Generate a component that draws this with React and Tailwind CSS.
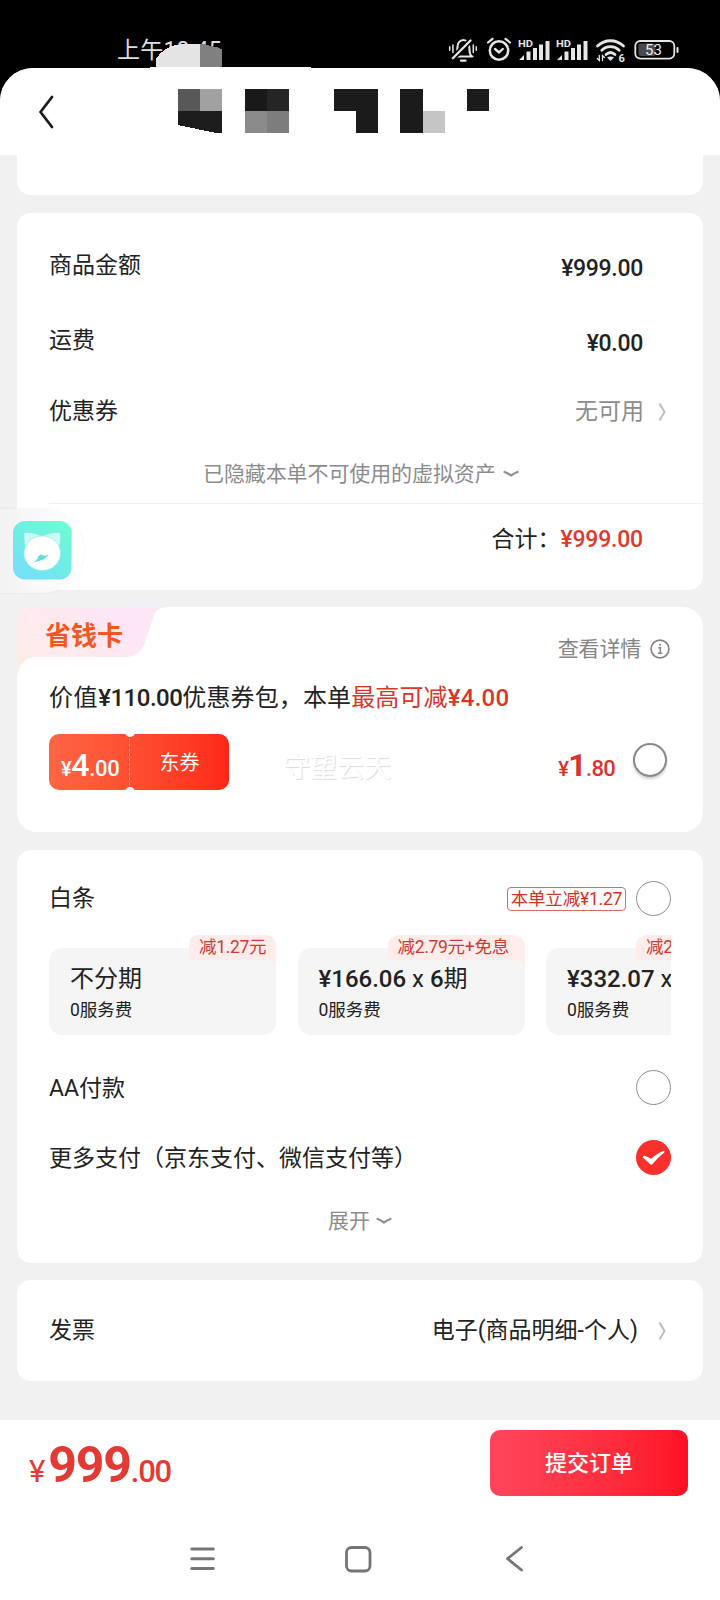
import React from 'react'

const plans = [
    { id: 1, title: '不分期', fee: '0服务费', badge: '减1.27元', badgeWidth: 'w-[87px]' },
    { id: 2, amount: '¥166.06', times: '6', unit: '期', fee: '0服务费', badge: '减2.79元+免息', badgeWidth: 'w-[137px]' },
    { id: 3, amount: '¥332.07', fee: '0服务费', badge: '减2', badgeWidth: 'w-[137px]' },
]

const StatusIcons = () => (
    <svg className="absolute left-[440px] top-[32px]" width="250" height="36" viewBox="440 32 250 36" fill="none" stroke="#e6e6e6" strokeLinecap="round">
        {/* muted bell */}
        <g strokeWidth="2.1">
            <path d="M454 56.500h18.500M455.500 56c1.800-2 1.900-4 1.900-8 0-4.800 2.500-8 6-8s6 3.200 6 8c0 4 .2 6 1.900 8" />
            <path d="M452.500 58.500L471 40" stroke="#000" strokeWidth="5.500" />
            <path d="M452.800 58.200L470.500 40.500" strokeWidth="2.300" />
            <path d="M461 60.700h4.500" strokeWidth="2.300" />
            <path d="M449.700 46.800v3.500M452.900 45v7.500M473.300 45v7.500M476.300 46.800v3.500" strokeWidth="1.500" />
        </g>
        {/* alarm */}
        <circle cx="499" cy="50.500" r="9.200" strokeWidth="2.500" />
        <path d="M495 49l4 3.400 3.800-3.400" strokeWidth="2.300" />
        <path d="M488 42.500l4.500-3.700M510 42.500l-4.500-3.700" strokeWidth="2.200" />
        {/* signals */}
        <g fill="#e6e6e6" stroke="none">
            <text x="518" y="46.800" fontSize="9.500" fontWeight="700" fontFamily="Roboto, sans-serif" textLength="15" lengthAdjust="spacingAndGlyphs">HD</text>
            <text x="556" y="46.800" fontSize="9.500" fontWeight="700" fontFamily="Roboto, sans-serif" textLength="15" lengthAdjust="spacingAndGlyphs">HD</text>
            <path d="M519 60l5-5v5zM526.500 51.500h4v8.500h-4zM533 48h4v12h-4zM539 44.500h4v15.500h-4zM545.500 41h4v19h-4z" />
            <path d="M557 60l5-5v5zM564.500 51.500h4v8.500h-4zM571 48h4v12h-4zM577 44.500h4v15.500h-4zM583.500 41h4v19h-4z" />
        </g>
        {/* wifi */}
        <path d="M597.500 46c7.500-7 18.500-7 26 0M601.800 50.300c5-4.800 12.400-4.800 17.400 0M606 54.500c2.800-2.600 6.200-2.600 9 0" strokeWidth="2.800" />
        <path d="M607 57.500l3.500 3.500 3.500-3.500c-2-1.500-5-1.500-7 0z" fill="#e6e6e6" stroke="none" />
        <path d="M599.300 55.500v5l-2-2M602.500 60.500v-5l2 2" strokeWidth="1.300" />
        <text x="618.500" y="61.500" fontSize="11" fontWeight="700" fill="#e6e6e6" stroke="none" fontFamily="Roboto, sans-serif">6</text>
        {/* battery */}
        <rect x="635.300" y="41" width="39" height="17.600" rx="5" strokeWidth="1.800" />
        <rect x="638.500" y="43.500" width="17" height="12.600" rx="2" fill="#4a4a4a" stroke="none" />
        <path d="M677.500 48v4" strokeWidth="2" />
        <text x="645" y="55.200" fontSize="15" fill="#eee" stroke="none" fontFamily="Roboto, sans-serif">53</text>
    </svg>
)

const Mosaic = () => (
    <svg className="absolute left-0 top-0" width="720" height="154" viewBox="0 0 720 154" shapeRendering="crispEdges">
        <path d="M150 68v-1.500h155l9 1.500z" fill="#fff" />
        <path d="M156 67V59Q164 46 182 44H200V67z" fill="#e4e4e4" />
        <path d="M200 44H204L222 49V67H200z" fill="#808080" />
        <path d="M178 89h22v22h-22z" fill="#585858" />
        <path d="M200 89h22v22h-22z" fill="#a1a1a1" />
        <path d="M178 111h44v22h-6l-38-8z" fill="#1d1d1d" />
        <path d="M245 89h22v22h-22z" fill="#191919" />
        <path d="M267 89h22v22h-22z" fill="#252525" />
        <path d="M245 111h22v22h-22z" fill="#8b8b8b" />
        <path d="M267 111h22v22h-22z" fill="#7d7d7d" />
        <path d="M334 89h44v44h-22v-22h-22z" fill="#1b1b1b" />
        <path d="M400 89h22.500v44h-22.500z" fill="#1b1b1b" />
        <path d="M422.500 111h22v22h-22z" fill="#c5c5c5" />
        <path d="M467 89h22v22h-22z" fill="#1b1b1b" />
    </svg>
)

const Chevron = () => (
    <svg width="9" height="20" viewBox="0 0 9 20" fill="none" stroke="#bdbdbd" strokeWidth="2">
        <path d="M1.500 1.500L6.500 10l-5 8.500" />
    </svg>
)

const Caret = () => (
    <svg width="16" height="8" viewBox="0 0 16 8" fill="none" stroke="#8f8f8f" strokeWidth="2.2" strokeLinecap="round" strokeLinejoin="round">
        <path d="M1.500 2q3 1 6.500 3.500q3.500-2.500 6.500-3.500" />
    </svg>
)

const Radio = () => <span className="h-[35px] w-[35px] shrink-0 rounded-full border border-[#8c8c8c]" />

const Plan = ({ plan }) => (
    <div className="relative h-[87px] w-[227px] shrink-0 rounded-[13px] bg-[#f5f5f5] pl-[22px] pt-[14px]">
        <div className={`absolute right-0 -top-[13px] h-[33px] ${plan.badgeWidth}`}>
            <svg className="absolute inset-0 h-full w-full" viewBox="0 0 100 33" preserveAspectRatio="none">
                <path d="M0 25V12Q0 0 10 0H88Q100 0 100 12V33Q99 25 90 25z" fill="#ffeceb" />
            </svg>
            <span className="absolute left-[10px] top-0 whitespace-nowrap text-[17.500px] leading-[25px] tracking-[-0.3px] text-[#d03a31]">{plan.badge}</span>
        </div>
        <div className="-ml-px whitespace-nowrap text-[24px] leading-[34px]">
            {plan.title}
            {plan.amount && (
                <>
                    <span className="font-medium">{plan.amount}</span> x <span className="font-medium">{plan.times}</span>{plan.unit}
                </>
            )}
        </div>
        <div className="-ml-px text-[17.500px] leading-[28px]">{plan.fee}</div>
    </div>
)

const FloatingApp = () => (
    <div className="absolute left-0 top-[509px] flex h-[84px] w-[84px] items-center rounded-r-full bg-gradient-to-r from-[#f3f3f3]/90 to-white/90 pl-[13px] shadow-[0_0_3px_rgba(0,0,0,0.07)]">
        <svg className="-mt-px" width="58.500" height="58.500" viewBox="0 0 59 59">
            <defs>
                <linearGradient id="app" x1="0.1" y1="1" x2="0.8" y2="0">
                    <stop offset="0" stopColor="#76defd" />
                    <stop offset="0.5" stopColor="#70ece6" />
                    <stop offset="1" stopColor="#6ffbd4" />
                </linearGradient>
            </defs>
            <rect width="59" height="59" rx="12" fill="url(#app)" />
            <path d="M11.500 12q10-.5 18 4l-15 15q-4-8-3-19zM47.500 12q-10-.5-18 4l15 15q4-8 3-19z" fill="#fff" opacity="0.65" />
            <ellipse cx="29.500" cy="32.500" rx="18.500" ry="17.500" fill="#fff" stroke="#8fede4" strokeWidth="0.800" />
            <path d="M21 41.500l5-4.500 10-3-5 4.500-6 2zM24 37l4-3.500 3 1.500 5-.5-4 3z" fill="#5fdde0" />
        </svg>
    </div>
)

const App = () => {
    return (
        <div className="relative flex h-[1600px] w-[720px] flex-col overflow-hidden bg-black font-[Roboto,'Noto_Sans_CJK_SC',sans-serif] text-[23px] leading-[34px] text-[#222]">
            <div className="h-[68px] shrink-0 pl-[117px] pt-[34px] tracking-[0.2px] text-[#dedede]">上午10:45</div>
            <StatusIcons />

            <main className="flex flex-1 flex-col overflow-hidden rounded-t-[33px] bg-[#f1f1f1]">
                <header className="flex h-[87px] shrink-0 items-center bg-white pl-[38px]">
                    <svg width="17" height="36" viewBox="0 0 17 36" fill="none" stroke="#1c1c1c" strokeWidth="2.800" strokeLinecap="round" strokeLinejoin="round">
                        <path d="M14 3L2.500 18L14 33" />
                    </svg>
                </header>

                <div className="flex flex-col gap-[17.500px] px-[17px]">
                    <section className="h-[40px] rounded-b-[14px] bg-white" />

                    {/* amounts */}
                    <section className="h-[377px] rounded-[14px] bg-white pl-8 pt-[15px]">
                        <div className="flex h-[76px] items-center justify-between pr-[60px]">
                            <span>商品金额</span>
                            <span className="pt-[6px] font-medium tracking-[-0.300px]">¥999.00</span>
                        </div>
                        <div className="flex h-[75px] items-center justify-between pr-[60px]">
                            <span>运费</span>
                            <span className="pt-[6px] font-medium tracking-[-0.300px]">¥0.00</span>
                        </div>
                        <div className="flex h-[67px] items-center justify-between pr-[36px]">
                            <span>优惠券</span>
                            <span className="flex items-center gap-[14px] text-[#8c8c8c]">无可用<Chevron /></span>
                        </div>
                        <div className="flex h-[57px] items-center gap-[7px] pl-[154px] text-[21px] tracking-[-0.100px] text-[#8c8c8c]">
                            已隐藏本单不可使用的虚拟资产
                            <Caret />
                        </div>
                        <div className="flex h-[74px] items-center justify-end border-t border-[#f0f0f0] pr-[60px]">
                            合计：<span className="font-medium tracking-[-0.200px] text-[#e0382f]">¥999.00</span>
                        </div>
                    </section>

                    {/* saving card */}
                    <section className="relative h-[225px] rounded-[20px] bg-white pl-8">
                        <svg className="absolute left-0 top-0" width="152" height="74" viewBox="0 0 152 74">
                            <defs>
                                <linearGradient id="tab" x1="0" y1="1" x2="1" y2="0.4">
                                    <stop offset="0" stopColor="#ffece6" />
                                    <stop offset="1" stopColor="#fde6f8" />
                                </linearGradient>
                            </defs>
                            <path d="M0 70V18Q0 0 18 0H150Q140 0 137 8L127 38Q122 50 110 50H20Q3 50 0 70z" fill="url(#tab)" />
                        </svg>
                        <div className="relative flex h-[74px] justify-between pr-[33px]">
                            <span className="-ml-1 pt-[12px] text-[26px] font-bold text-[#f2571d]">省钱卡</span>
                            <span className="flex h-full items-center gap-[9px] pt-[10px] text-[21px] tracking-[-0.2px] text-[#858585]">
                                查看详情
                                <svg width="20" height="20" viewBox="0 0 20 20" fill="none" stroke="#858585" strokeWidth="1.700">
                                    <circle cx="10" cy="10" r="8.900" />
                                    <path d="M8.300 8.800h2V14M8 14.300h4.300M9 5.800h2" strokeWidth="1.500" />
                                </svg>
                            </span>
                        </div>
                        <div className="whitespace-nowrap text-[24px] tracking-[0.120px]">
                            <span className="tracking-[0.600px]">价值</span><span className="font-medium tracking-[-0.500px]">¥110.00</span>优惠券包，本单
                            <span className="text-[#da3529]">最高可减<span className="font-medium tracking-[0.300px]">¥4.00</span></span>
                        </div>
                        <div className="mt-[19px] flex items-center">
                            <div className="relative flex h-[56px] w-[180px] overflow-hidden rounded-[10px] bg-gradient-to-r from-[#ff6543] to-[#ff2618] text-white">
                                <div className="flex w-[81px] items-baseline border-r border-dashed border-white/40 pl-3 pt-[14px] font-medium tracking-[-0.300px]">
                                    <span className="text-[20px]">¥</span>
                                    <span className="text-[32px]">4</span>
                                    <span className="text-[22px]">.00</span>
                                </div>
                                <div className="flex flex-1 items-center justify-center pt-[2px] text-[20px]">东券</div>
                                <span className="absolute -top-[7px] left-[76px] h-[10px] w-[10px] rounded-full bg-white" />
                                <span className="absolute -bottom-[7px] left-[76px] h-[10px] w-[10px] rounded-full bg-white" />
                            </div>
                            <span className="ml-[54px] mt-3 text-[27px] text-white [text-shadow:1px_1px_1px_#dcdcdc]">守望云天</span>
                            <div className="ml-auto flex items-baseline pt-[9px] font-medium tracking-[-0.700px] text-[#d8352a]">
                                <span className="text-[20px]">¥</span>
                                <span className="text-[32px] font-bold">1</span>
                                <span className="text-[22px]">.80</span>
                            </div>
                            <span className="-mt-1 ml-[18px] mr-[36px] h-[34px] w-[34px] rounded-full border-[2.500px] border-[#888] shadow-[0_2px_3px_rgba(0,0,0,0.2)]" />
                        </div>
                    </section>

                    {/* payment */}
                    <section className="h-[413px] rounded-[14px] bg-white px-8 pt-[14px]">
                        <div className="flex h-[70px] items-center">
                            <span className="pt-px">白条</span>
                            <span className="ml-auto mr-[10px] flex h-[24px] w-[119px] items-center justify-center whitespace-nowrap rounded-[4px] border border-[#cf6d62] text-[17.500px] tracking-[-0.2px] text-[#cf3327]">本单立减¥1.27</span>
                            <Radio />
                        </div>
                        <div className="flex gap-[21.500px] overflow-hidden pt-[14px]">
                            {plans.map((plan) => <Plan key={plan.id} plan={plan} />)}
                        </div>
                        <div className="mt-[18px] flex h-[70px] items-center justify-between">
                            <span className="pt-[2px]">AA付款</span>
                            <Radio />
                        </div>
                        <div className="flex h-[70px] items-center justify-between">
                            <span className="pt-[2px]">更多支付（京东支付、微信支付等）</span>
                            <svg width="35" height="35" viewBox="0 0 35 35">
                                <circle cx="17.500" cy="17.500" r="17.500" fill="#fa302c" />
                                <path d="M6.500 17.200q1.500-2 3.500-1l5 2.500q6-5.500 12.500-8q2 .6 0 2.500Q21 18 16.500 24q-1 1.500-2.500 0z" fill="#fff" />
                            </svg>
                        </div>
                        <div className="flex h-[56px] items-center justify-center gap-[6px] text-[21px] text-[#8c8c8c]">
                            展开
                            <Caret />
                        </div>
                    </section>

                    {/* invoice */}
                    <section className="flex h-[101px] items-center justify-between rounded-[14px] bg-white pl-8 pr-[36px]">
                        <span className="pt-px">发票</span>
                        <span className="flex items-center gap-[20px] pt-px">电子(商品明细-个人)<Chevron /></span>
                    </section>
                </div>

                <footer className="mt-auto h-[180px] shrink-0 bg-white">
                    <div className="flex h-[86px] items-center justify-between pl-[29px] pr-8">
                        <div className="flex items-baseline pt-[10px] font-medium text-[#e43a36]">
                            <span className="mr-[3px] text-[31px] font-normal">¥</span>
                            <span className="text-[50px] font-bold tracking-[-1.200px]">999</span>
                            <span className="text-[31px] tracking-[-1.200px]">.00</span>
                        </div>
                        <button className="h-[66px] w-[198px] rounded-[10px] bg-gradient-to-r from-[#ff455b] to-[#ff0f23] pt-px text-[22px] font-medium text-white">提交订单</button>
                    </div>
                    <nav className="flex h-[106px] items-center pl-[189px]">
                        <svg width="27" height="27" viewBox="0 0 27 27" stroke="#757575" strokeWidth="3" strokeLinecap="round">
                            <path d="M2.800 3h21.500M2.800 12.700h21.500M2.800 22.400h21.500" />
                        </svg>
                        <svg className="ml-[129px]" width="27" height="27" viewBox="0 0 27 27" fill="none" stroke="#757575" strokeWidth="2.800">
                            <rect x="1.500" y="1.500" width="23.500" height="23.500" rx="5" />
                        </svg>
                        <svg className="ml-[133px]" width="20" height="27" viewBox="0 0 20 27" fill="none" stroke="#757575" strokeWidth="2.800" strokeLinecap="round" strokeLinejoin="round">
                            <path d="M16.500 1.500L2.500 12.700L16.500 24" />
                        </svg>
                    </nav>
                </footer>
            </main>

            <Mosaic />
            <FloatingApp />
        </div>
    )
}

export default App
